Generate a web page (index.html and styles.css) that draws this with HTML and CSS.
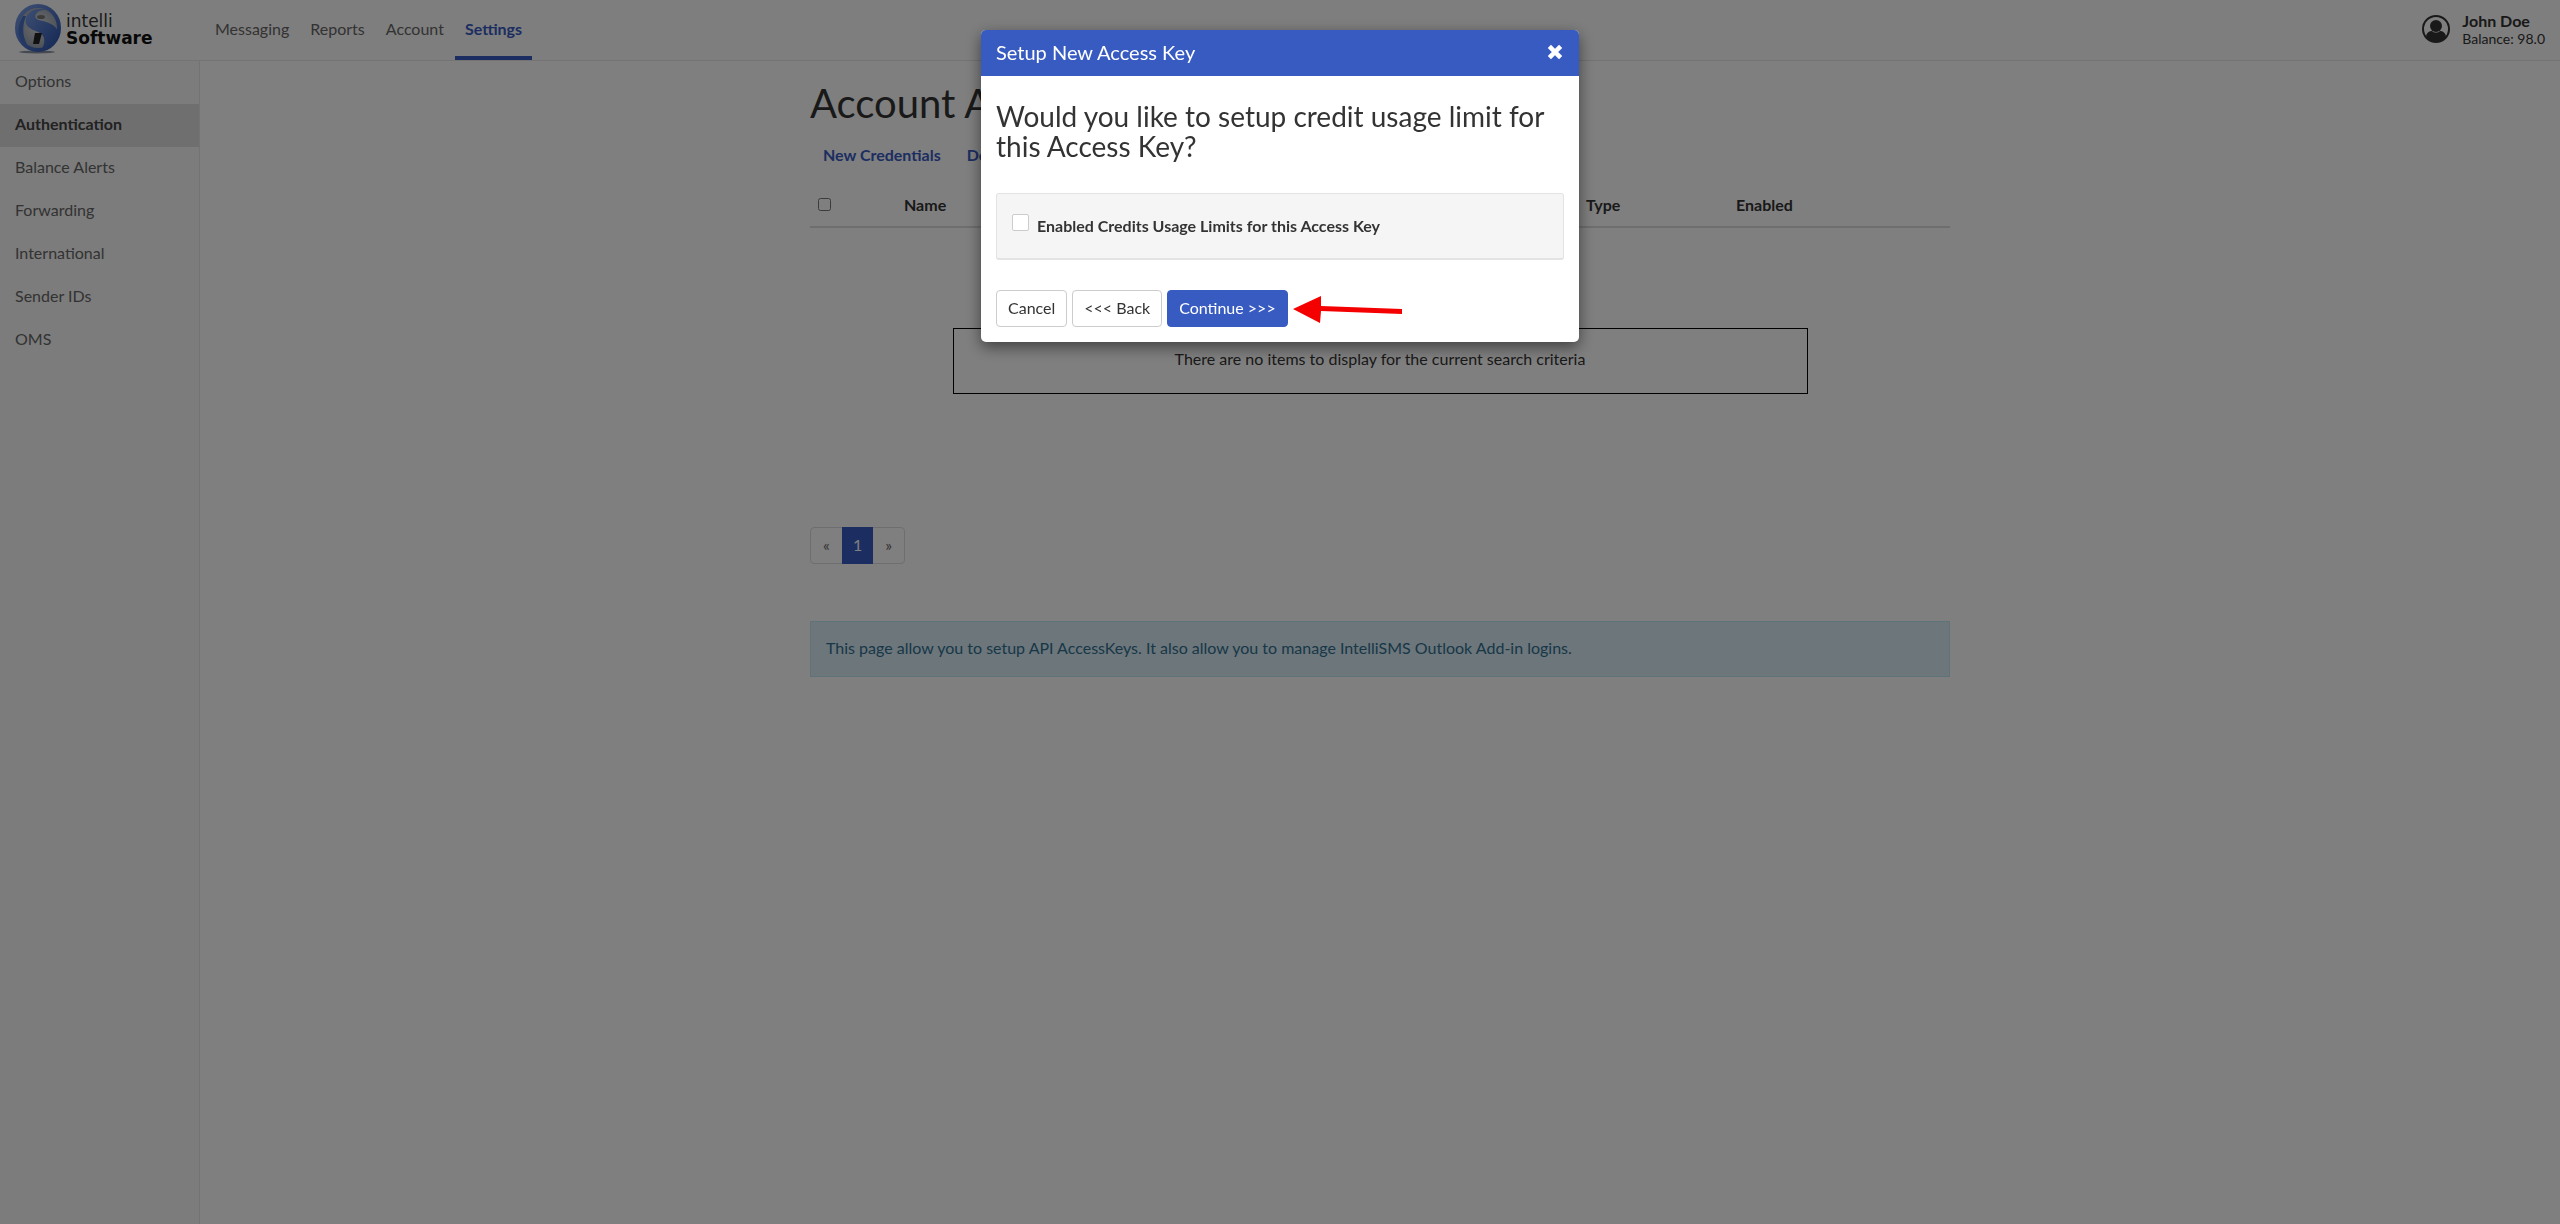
FILE: index.html
```html
<!DOCTYPE html>
<html lang="en">

<head>
  <meta charset="UTF-8">
  <meta name="viewport" content="width=device-width, initial-scale=1.0">
  <title>Account Authentication - intelliSoftware</title>
  <link rel="stylesheet" href="styles.css">
</head>

<body>
  <header class="topbar">
    <a href="#" class="brand">
      <svg class="brand-icon" viewBox="0 0 48 50" aria-hidden="true">
        <defs>
          <radialGradient id="ball" cx="50%" cy="45%" r="60%">
            <stop offset="0" stop-color="#dcdcdc" />
            <stop offset="1" stop-color="#8d97a8" />
          </radialGradient>
          <linearGradient id="swirl" x1="0" y1="0" x2="1" y2="1">
            <stop offset="0" stop-color="#7a9de4" />
            <stop offset="1" stop-color="#2b52ac" />
          </linearGradient>
        </defs>
        <ellipse cx="23" cy="48" rx="18" ry="1.5" fill="#8a93a5" />
        <ellipse cx="24" cy="24" rx="21" ry="22" fill="url(#ball)" stroke="url(#swirl)" stroke-width="4" />
        <path d="M33 6C26 3 14 6 12 14c-2 8 4 11 12 14 7 3 8 9 4 17l2 1c8-3 14-10 14-18-1-6-8-9-15-11-7-1-9-4-7-7 2-4 7-4 11-4z" fill="url(#swirl)" />
        <path d="M9 12c-6 9-6 20 0 28l7 5C9 36 7 24 12 12z" fill="#4770c4" />
        <ellipse cx="27" cy="13" rx="4" ry="2" fill="#777" />
        <path d="M21 29h7l-3 11h-6z" fill="#222" />
      </svg>
      <span class="brand-text">intelli<strong>Software</strong></span>
    </a>
    <nav class="main-nav">
      <a href="#">Messaging</a>
      <a href="#">Reports</a>
      <a href="#">Account</a>
      <a href="#" class="active">Settings</a>
    </nav>
    <a href="#" class="user">
      <svg class="user-icon" viewBox="0 0 28 28" aria-hidden="true">
        <circle cx="14" cy="14" r="13" fill="none" stroke="#333" stroke-width="2" />
        <circle cx="14" cy="11" r="6" fill="#333" />
        <path d="M4 21c1-4 4-5 6-5 2 2 6 2 8 0 2 0 5 1 6 5-2 4-6 6-10 6s-8-2-10-6z" fill="#333" />
      </svg>
      <span class="user-text"><strong>John Doe</strong>Balance: 98.0</span>
    </a>
  </header>

  <div class="page">
    <nav class="sidebar">
      <a href="#">Options</a>
      <a href="#" class="active">Authentication</a>
      <a href="#">Balance Alerts</a>
      <a href="#">Forwarding</a>
      <a href="#">International</a>
      <a href="#">Sender IDs</a>
      <a href="#">OMS</a>
    </nav>

    <main class="content">
      <div class="container">
        <h1>Account Authentication</h1>
        <div class="actions">
          <a href="#">New Credentials</a>
          <a href="#">Delete</a>
        </div>
        <table class="keys">
          <thead>
            <tr>
              <th class="col-check"><input type="checkbox" aria-label="Select all"></th>
              <th class="col-name">Name</th>
              <th class="col-type">Type</th>
              <th>Enabled</th>
            </tr>
          </thead>
        </table>
        <p class="empty">There are no items to display for the current search criteria</p>
        <nav class="pagination" aria-label="Pages">
          <a href="#">«</a>
          <a href="#" class="active">1</a>
          <a href="#">»</a>
        </nav>
        <div class="alert">This page allow you to setup API AccessKeys. It also allow you to manage IntelliSMS Outlook Add-in logins.</div>
      </div>
    </main>
  </div>

  <!-- access key wizard -->
  <div class="overlay">
    <div class="modal" role="dialog" aria-labelledby="modal-title">
      <div class="modal-header">
        <h2 id="modal-title">Setup New Access Key</h2>
        <button type="button" class="close" aria-label="Close">
          <svg viewBox="0 0 16 16" aria-hidden="true">
            <path d="M3 3l10 10M13 3L3 13" stroke="#fff" stroke-width="4" />
          </svg>
        </button>
      </div>
      <div class="modal-body">
        <h3>Would you like to setup credit usage limit for this Access Key?</h3>
        <div class="well">
          <input type="checkbox" id="limits">
          <label for="limits">Enabled Credits Usage Limits for this Access Key</label>
        </div>
        <div class="buttons">
          <button type="button" class="btn">Cancel</button>
          <button type="button" class="btn">&lt;&lt;&lt; Back</button>
          <button type="button" class="btn btn-primary">Continue &gt;&gt;&gt;</button>
          <svg class="arrow" viewBox="0 0 110 28" aria-hidden="true">
            <path d="M0 14L28 1v10l81 3v5l-81-3-1 12z" fill="#f50000" />
          </svg>
        </div>
      </div>
    </div>
  </div>
</body>

</html>
```

FILE: styles.css
```css
* {
  box-sizing: border-box;
}

body {
  margin: 0;
  min-height: 100vh;
  display: flex;
  flex-direction: column;
  font-family: Lato, "Open Sans", sans-serif;
  font-size: 16px;
  line-height: 23px;
  color: #333;
  background: #fff;
}

h1,
h2,
h3,
p {
  margin: 0;
  font-weight: 400;
}

a {
  text-decoration: none;
  color: #385bc2;
}

/* top bar */
.topbar {
  display: flex;
  height: 61px;
  border-bottom: 1px solid #e7e7e7;
  background: #fcfcfc;
}

.brand {
  display: flex;
  width: 205px;
  padding: 4px 0 0 14px;
  color: #333;
}

.brand-icon {
  width: 48px;
  height: 50px;
}

.brand-text {
  padding: 9px 0 0 4px;
  font-family: "DejaVu Sans", sans-serif;
  font-size: 17px;
  line-height: 17px;
}

.brand-text strong {
  display: block;
  color: #111;
}

.main-nav {
  display: flex;
  gap: 1px;
}

.main-nav a {
  padding: 17px 10px 16px;
  border-bottom: 4px solid transparent;
  color: #666;
}

.main-nav a.active {
  border-color: #385bc2;
  color: #385bc2;
  font-weight: 700;
}

.user {
  display: flex;
  gap: 12px;
  margin-left: auto;
  padding: 12px 15px 0 0;
  color: #333;
}

.user-icon {
  width: 28px;
  height: 28px;
  margin-top: 3px;
}

.user-text {
  font-size: 14px;
  line-height: 18px;
}

.user-text strong {
  display: block;
  font-size: 16px;
}

/* layout */
.page {
  flex: 1;
  display: flex;
}

.sidebar {
  width: 200px;
  border-right: 1px solid #e7e7e7;
  background: #f8f8f8;
}

.sidebar a {
  display: block;
  padding: 8px 15px 12px;
  color: #666;
}

.sidebar a.active {
  background: #dfdfdf;
  color: #444;
  font-weight: 700;
}

.content {
  flex: 1;
}

.container {
  max-width: 1140px;
  margin: 0 auto;
}

h1 {
  padding-top: 20px;
  font-size: 40px;
  line-height: 44px;
}

.actions {
  display: flex;
  padding-top: 18px;
}

.actions a {
  padding: 0 13px;
  font-weight: 700;
}

/* table */
.keys {
  width: 100%;
  margin-top: 20px;
  border-collapse: collapse;
  table-layout: fixed;
}

.keys th {
  padding: 7px 8px 10px;
  border-bottom: 2px solid #ddd;
  text-align: left;
}

.keys input {
  display: block;
  width: 13px;
  height: 13px;
  margin: 0;
}

.col-check {
  width: 86px;
}

.col-name {
  width: 682px;
}

.col-type {
  width: 150px;
}

.empty {
  width: 75%;
  margin: 100px auto 0;
  padding: 18px 20px 23px;
  border: 1px solid #000;
  text-align: center;
}

.pagination {
  display: flex;
  width: max-content;
  margin-top: 133px;
  border: 1px solid #ddd;
  border-radius: 4px;
}

.pagination a {
  padding: 5px 12px 7px;
  color: #666;
}

.pagination a.active {
  margin: -1px 0;
  padding: 6px 11px 8px;
  background: #385bc2;
  color: #fff;
}

.alert {
  margin-top: 57px;
  padding: 14px 15px 17px;
  border: 1px solid #bce8f1;
  background: #d9edf7;
  color: #31708f;
}

/* modal */
.overlay {
  position: fixed;
  inset: 0;
  padding-top: 30px;
  background: rgba(0, 0, 0, 0.5);
}

.modal {
  max-width: 598px;
  margin: 0 auto;
  border-radius: 5px;
  background: #fff;
  box-shadow: 0 5px 15px rgba(0, 0, 0, 0.5);
}

.modal-header {
  display: flex;
  justify-content: space-between;
  align-items: center;
  padding: 9px 15px 11px;
  border-radius: 5px 5px 0 0;
  background: #385bc2;
  color: #fff;
}

.modal-header h2 {
  font-size: 20px;
  line-height: 26px;
}

.close {
  width: 18px;
  height: 18px;
  padding: 0;
  border: 0;
  background: none;
}

.close svg {
  display: block;
}

.modal-body {
  padding: 25px 15px 15px;
}

.modal-body h3 {
  font-size: 28px;
  line-height: 30px;
}

.well {
  display: flex;
  gap: 8px;
  margin: 32px 0 30px;
  padding: 20px 15px 21px;
  border: 1px solid #e3e3e3;
  border-bottom-width: 2px;
  border-radius: 3px;
  background: #f5f5f5;
  font-weight: 700;
}

.well input {
  appearance: none;
  width: 17px;
  height: 17px;
  margin: 0;
  border: 1px solid #ccc;
  border-radius: 2px;
  background: #fff;
}

.buttons {
  display: flex;
  gap: 5px;
}

.btn {
  padding: 5px 11px 7px;
  border: 1px solid #ccc;
  border-radius: 4px;
  background: #fff;
  color: #333;
  font: inherit;
}

.btn-primary {
  border-color: #385bc2;
  background: #385bc2;
  color: #fff;
}

.arrow {
  width: 110px;
  height: 28px;
  margin-top: 5px;
}
```
